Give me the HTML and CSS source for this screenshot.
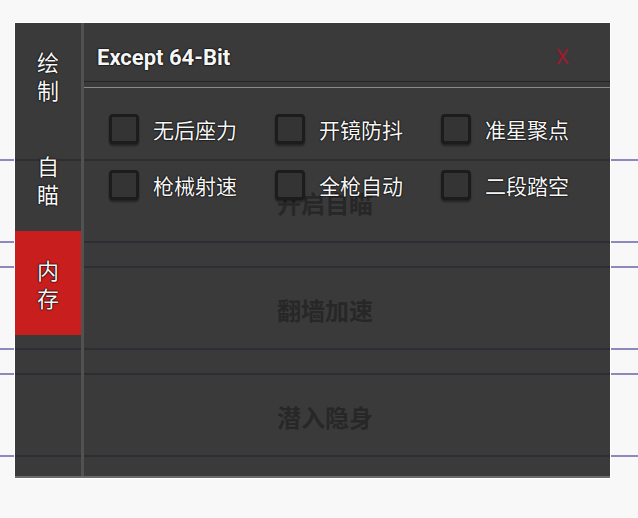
FILE: index.html
```html
<!DOCTYPE html>
<html lang="zh-CN">
<head>
  <meta charset="UTF-8" />
  <meta name="viewport" content="width=device-width, initial-scale=1.0"/>
  <title>Except 64-Bit</title>
  <link rel="stylesheet" href="styles.css">
</head>
<body>

  <div class="feed">
    <div class="card">开启自瞄</div>
    <div class="card">翻墙加速</div>
    <div class="card">潜入隐身</div>
  </div>

  <div class="panel">
    <div class="tabs">
      <div class="tab">绘<br>制</div>
      <div class="tab">自<br>瞄</div>
      <div class="tab active">内<br>存</div>
    </div>

    <div class="main">
      <div class="header">
        <span class="title">Except 64-Bit</span>
        <span class="close">X</span>
      </div>

      <div class="options">
        <label class="option"><span class="box"></span>无后座力</label>
        <label class="option"><span class="box"></span>开镜防抖</label>
        <label class="option"><span class="box"></span>准星聚点</label>
        <label class="option"><span class="box"></span>枪械射速</label>
        <label class="option"><span class="box"></span>全枪自动</label>
        <label class="option"><span class="box"></span>二段踏空</label>
      </div>
    </div>
  </div>

</body>
</html>
```

FILE: styles.css
```css
body {
  margin: 0;
  background-color: #f8f8f8;
  font-family: "Noto Sans CJK SC", "Noto Sans", sans-serif;
  width: 638px;
  height: 518px;
  overflow: hidden;
  position: relative;
}
.feed {
  padding-top: 159px;
}
.card {
  border-top: 2px solid #8c89bc;
  border-bottom: 2px solid #8c89bc;
  margin-bottom: 23px;
  display: flex;
  align-items: center;
  justify-content: center;
  padding: 3px 0 0 12px;
  height: 77px;
  font-size: 24px;
  font-weight: bold;
  color: #555555;
}
.panel {
  position: absolute;
  left: 15px;
  top: 23px;
  width: 595px;
  height: 455px;
  box-sizing: border-box;
  background: rgba(34, 34, 34, 0.89);
  border-bottom: 2px solid #6a6a6a;
  box-shadow: 0 0 0 1px #ffffff;
  display: flex;
  color: #f6f6f6;
  text-shadow: 0 0 2px #000, 0 0 1px #000, 0 0 1px #000;
}
.tabs {
  width: 66px;
  border-right: 3px solid #525252;
  flex-shrink: 0;
}
.tab {
  height: 104px;
  display: flex;
  align-items: center;
  justify-content: center;
  text-align: center;
  font-size: 22px;
  line-height: 28px;
}
.tab.active {
  background-color: #c91e1e;
}
.main {
  flex: 1;
  display: flex;
  flex-direction: column;
}
.header {
  height: 58px;
  display: flex;
  align-items: center;
  justify-content: space-between;
  padding: 0 41px 0 13px;
  border-bottom: 1px solid #262626;
}
.title {
  font-family: Roboto, "Liberation Sans", sans-serif;
  font-weight: bold;
  font-size: 22px;
  padding-top: 10px;
}
.close {
  font-family: Roboto, "Liberation Sans", sans-serif;
  font-size: 21px;
  color: #9a1c2e;
  text-shadow: none;
  padding-top: 10px;
}
.options {
  margin-top: 5px;
  border-top: 1px solid #8a8a8a;
  padding: 26px 0 0 25px;
  display: grid;
  grid-template-columns: repeat(3, 166px);
  grid-auto-rows: 56px;
}
.option {
  display: flex;
  align-items: flex-start;
  gap: 14px;
  font-size: 21px;
  line-height: 30px;
}
.box {
  width: 24px;
  height: 24px;
  border: 3px solid #1c1c1c;
  border-radius: 4px;
  background-color: #343434;
  box-shadow: 0 2px 2px rgba(0, 0, 0, 0.4);
  flex-shrink: 0;
}
```
